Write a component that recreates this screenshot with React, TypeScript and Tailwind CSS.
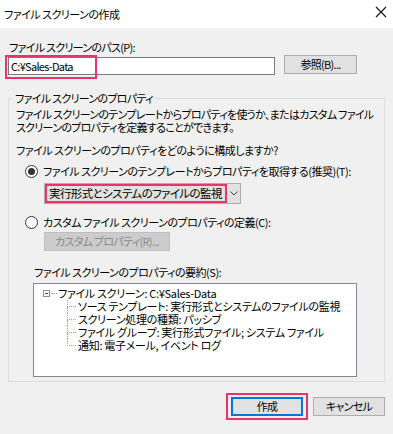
import React from "react";

const font = "[font-family:'Noto_Sans_CJK_JP',sans-serif] [font-feature-settings:'palt']";

function Radio({ checked }: { checked?: boolean }) {
  return (
    <span className="w-[13px] h-[13px] rounded-full border border-[#333333] bg-white flex items-center justify-center shrink-0">
      {checked && <span className="w-[7px] h-[7px] rounded-full bg-[#333333]" />}
    </span>
  );
}

const treeChildren = [
  "ソース テンプレート: 実行形式とシステムのファイルの監視",
  "スクリーン処理の種類: パッシブ",
  "ファイル グループ: 実行形式ファイル; システム ファイル",
  "通知: 電子メール, イベント ログ",
];

export default function App() {
  return (
    <div className={`w-[393px] h-[434px] bg-[#f0f0f0] text-black text-[11px] tracking-[-0.7px] leading-[15px] whitespace-nowrap ${font} flex flex-col`}>
      {/* title bar */}
      <div className="h-[28px] bg-white flex items-center justify-between pl-[4px] pr-[6px]">
        <span className="tracking-[-0.5px]">ファイル スクリーンの作成</span>
        <svg width="12" height="12" viewBox="0 0 12 12" className="mt-[-4px]">
          <path d="M1 1 L11 11 M11 1 L1 11" stroke="#111" strokeWidth="1.1" />
        </svg>
      </div>

      <div className="px-[8px] pt-[12px] flex flex-col">
        <div className="pl-[1px]">ファイル スクリーンのパス(P):</div>
        <div className="flex items-start gap-[9px]">
          <div className="relative mt-[2px] w-[267px] h-[18px] border border-[#7a7a7a] bg-white flex items-center pl-[2px]">
            C:¥Sales-Data
            <span className="absolute left-[-4px] top-[-3px] w-[92px] h-[24px] border-[2px] border-[#e8336d]" />
          </div>
          <button className="w-[73px] h-[19px] border border-[#adadad] bg-[#e1e1e1] flex items-center justify-center">
            参照(B)...
          </button>
        </div>

        <fieldset className="mt-[16px] border border-[#dcdcdc] px-[7px] pb-[6px] h-[291px]">
          <legend className="ml-[-3px] px-[2px]">ファイル スクリーンのプロパティ</legend>
          <div className="pt-[2px] leading-[13px]">
            <div>ファイル スクリーンのテンプレートからプロパティを使うか、またはカスタム ファイル</div>
            <div>スクリーンのプロパティを定義することができます。</div>
          </div>
          <div className="mt-[9px] tracking-[-0.5px]">ファイル スクリーンのプロパティをどのように構成しますか?</div>

          <div className="mt-[6px] ml-[9px] flex items-center gap-[5px]">
            <Radio checked />
            <span className="tracking-[-0.5px]">ファイル スクリーンのテンプレートからプロパティを取得する(推奨)(T):</span>
          </div>
          <div className="mt-[4px] ml-[28px] w-[197px] h-[21px] border border-[#adadad] bg-[#e1e1e1] flex">
            <div className="w-[182px] h-full border-[2px] border-[#e8336d] flex items-center pl-[2px] text-[11.5px] tracking-[-0.6px]">
              実行形式とシステムのファイルの監視
            </div>
            <div className="flex-1 flex items-center justify-center">
              <svg width="8" height="5" viewBox="0 0 8 5">
                <path d="M0.5 0.5 L4 4 L7.5 0.5" stroke="#444" fill="none" />
              </svg>
            </div>
          </div>

          <div className="mt-[11px] ml-[9px] flex items-center gap-[5px]">
            <Radio />
            <span className="tracking-[-0.5px]">カスタム ファイル スクリーンのプロパティの定義(C):</span>
          </div>
          <div className="mt-[2px] ml-[28px] w-[126px] h-[19px] border border-[#bfbfbf] bg-[#cccccc] text-[#8a8a8a] flex items-center justify-center">
            カスタム プロパティ(R)...
          </div>

          <div className="mt-[14px] ml-[18px] tracking-[-0.5px]">ファイル スクリーンのプロパティの要約(S):</div>
          <div className="mt-[3px] ml-[17px] w-[324px] h-[94px] border border-[#828790] bg-white pt-[3px] pl-[9px] leading-[13px] tracking-[-0.3px]">
            <div className="flex items-center h-[13px]">
              <span className="w-[7px] h-[7px] border border-[#919191] flex items-center justify-center shrink-0">
                <span className="w-[3px] h-[1px] bg-[#2f4fa0]" />
              </span>
              <span className="w-[6px] border-t border-dotted border-[#a0a0a0] mx-[1px]" />
              <span>ファイル スクリーン: C:¥Sales-Data</span>
            </div>
            <div className="ml-[24px] flex flex-col">
              {treeChildren.map((t, i) => (
                <div key={t} className="flex h-[13px] shrink-0">
                  <div className="w-[9px] flex flex-col shrink-0">
                    <span className="h-[7px] border-l border-b border-dotted border-[#a0a0a0]" />
                    <span
                      className={
                        i < treeChildren.length - 1
                          ? "flex-1 border-l border-dotted border-[#a0a0a0]"
                          : "flex-1"
                      }
                    />
                  </div>
                  <span className="pl-[2px] flex items-center">{t}</span>
                </div>
              ))}
            </div>
          </div>
        </fieldset>

        <div className="mt-[11px] flex justify-end items-center gap-[5px]">
          <span className="border-[2px] border-[#e8336d] py-[2px] px-[3px]">
            <button className="w-[72px] h-[19px] border-[2px] border-[#0078d7] bg-[#e1e1e1] flex items-center justify-center">
              作成
            </button>
          </span>
          <button className="w-[72px] h-[19px] border border-[#adadad] bg-[#e1e1e1] flex items-center justify-center">
            キャンセル
          </button>
        </div>
      </div>
    </div>
  );
}
